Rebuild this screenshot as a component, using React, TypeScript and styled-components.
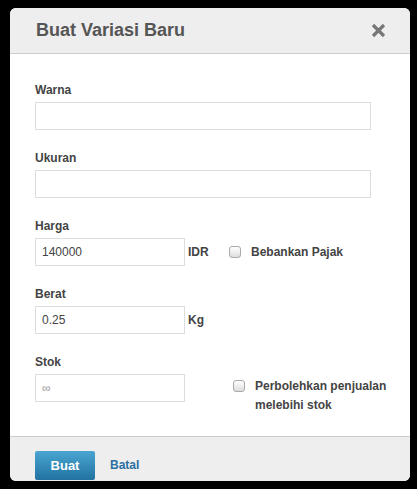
import React from "react";
import styled, { createGlobalStyle } from "styled-components";

const G = createGlobalStyle`
  html, body { margin:0; background:#000; }
  body { font-family: "Liberation Sans", Arial, sans-serif; }
`;
const Modal = styled.div`
  margin: 8px 0 0 10px; width: 400px; height: 473px; background:#fff;
  border-radius: 6px; overflow: hidden; display:flex; flex-direction:column;
`;
const Header = styled.div`
  height: 45px; flex:none; background:#eee; border-bottom:1px solid #ccc; display:flex;
  align-items:center; justify-content:space-between; padding: 0 24px 0 26px;
`;
const Title = styled.h1`margin:0; font-size:18px; font-weight:bold; color:#555;`;
const Body = styled.div`flex:1; padding: 29px 25px 0 25px; display:flex; flex-direction:column;`;
const Field = styled.div`margin-bottom: 21px;`;
const Label = styled.div`font-size:12px; font-weight:bold; color:#444; height:16px; margin-bottom:3px;`;
const Input = styled.input<{ $w?: number }>`
  box-sizing:border-box; width:${p => p.$w ?? 336}px; height:28px; border:1px solid #ddd;
  font: 12px "Liberation Sans", Arial, sans-serif; color:#444; padding: 0 6px; outline:none;
  &::placeholder { color:#999; }
`;
const Row = styled.div<{ $top?: boolean }>`display:flex; align-items:${p => (p.$top ? "flex-start" : "center")};`;
const Unit = styled.span`font-size:12px; font-weight:bold; color:#444; margin-left:3px; width:38px;`;
const Check = styled.span`
  width:12px; height:12px; border:1px solid #aaa; border-radius:3px; box-sizing:border-box;
  background:linear-gradient(#fff,#ddd); flex:none;
`;
const CheckLabel = styled.label<{ $ml: number; $mt?: number }>`
  display:flex; align-items:flex-start; gap:10px; margin-left:${p => p.$ml}px; margin-top:${p => p.$mt ?? 0}px;
  font-size:12px; font-weight:bold; color:#444; line-height:19px; white-space:nowrap;
  ${Check} { margin-top:3px; }
`;
const Footer = styled.div`
  height:56px; flex:none; background:#eee; border-top:1px solid #ccc; display:flex; align-items:center;
  padding: 0 25px; gap:15px;
`;
const Btn = styled.button`
  width:60px; height:29px; border:none; border-radius:2px; color:#fff; font-weight:bold;
  font-size:13px; font-family:inherit; background:linear-gradient(#4aa6d1,#2172a0);
`;
const Link = styled.a`color:#2a6fa0; font-size:12px; font-weight:bold;`;

export default function App() {
  return (
    <>
      <G />
      <Modal>
        <Header>
          <Title>Buat Variasi Baru</Title>
          <svg width="15" height="15" viewBox="0 0 15 15">
            <path d="M2 2L13 13M13 2L2 13" stroke="#777" strokeWidth="3.2" />
          </svg>
        </Header>
        <Body>
          <Field><Label>Warna</Label><Input /></Field>
          <Field><Label>Ukuran</Label><Input /></Field>
          <Field>
            <Label>Harga</Label>
            <Row><Input $w={150} defaultValue="140000" /><Unit>IDR</Unit>
              <CheckLabel $ml={3}><Check />Bebankan Pajak</CheckLabel></Row>
          </Field>
          <Field>
            <Label>Berat</Label>
            <Row><Input $w={150} defaultValue="0.25" /><Unit>Kg</Unit></Row>
          </Field>
          <Field>
            <Label>Stok</Label>
            <Row $top>
              <Input $w={150} placeholder="∞" />
              <CheckLabel $ml={48} $mt={3}><Check /><span>Perbolehkan penjualan<br />melebihi stok</span></CheckLabel>
            </Row>
          </Field>
        </Body>
        <Footer><Btn>Buat</Btn><Link>Batal</Link></Footer>
      </Modal>
    </>
  );
}
